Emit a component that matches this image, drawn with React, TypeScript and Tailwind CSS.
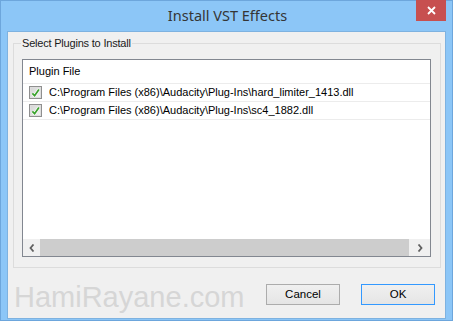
import { useState } from 'react';

const plugins = [
  'C:\\Program Files (x86)\\Audacity\\Plug-Ins\\hard_limiter_1413.dll',
  'C:\\Program Files (x86)\\Audacity\\Plug-Ins\\sc4_1882.dll',
];

function CheckBox({ checked }: { checked: boolean }) {
  return (
    <span className="flex h-[13px] w-[13px] shrink-0 items-center justify-center border border-[#8f8f8f] bg-[#f4f4f4]">
      <span className="flex h-[11px] w-[11px] items-center justify-center border border-[#dedede] bg-gradient-to-br from-[#d6d6d6] to-[#f2f2f2]">
        {checked && (
          <svg width="10" height="10" viewBox="0 0 10 10">
            <path d="M1.5 5.5 L4 8 L8.8 1.2" fill="none" stroke="#ffffff" strokeWidth="3.2" strokeLinejoin="round" />
            <path d="M1.5 5.5 L4 8 L8.8 1.2" fill="none" stroke="#3aa22c" strokeWidth="1.9" />
          </svg>
        )}
      </span>
    </span>
  );
}

function Chevron({ dir }: { dir: 'left' | 'right' }) {
  return (
    <svg width="6" height="8" viewBox="0 0 6 8">
      <path
        d={dir === 'left' ? 'M4.5 0.5 L1.5 4 L4.5 7.5' : 'M1.5 0.5 L4.5 4 L1.5 7.5'}
        fill="none"
        stroke="#606060"
        strokeWidth="1.8"
      />
    </svg>
  );
}

export default function App() {
  const [checked] = useState([true, true]);

  return (
    <div
      className="relative h-[323px] w-[453px] overflow-hidden bg-white"
      style={{ fontFamily: '"Liberation Sans", Arial, sans-serif' }}
    >
      <div className="flex h-[321px] w-full flex-col border border-[#6da6dc] bg-[#8cc6f7]">
        {/* title bar */}
        <div className="relative flex h-[30px] shrink-0 items-center justify-center">
          <span className="pl-[2px] text-[14.5px] text-[#353535]" style={{ fontFamily: '"Noto Sans", "Liberation Sans", sans-serif' }}>
            Install VST Effects
          </span>
          <div className="absolute right-[6px] top-[-1px] flex h-[21px] w-[30px] items-center justify-center bg-[#c75050]">
            <svg width="9" height="9" viewBox="0 0 9 9">
              <path d="M1 1 L8 8 M8 1 L1 8" stroke="#ffffff" strokeWidth="1.8" />
            </svg>
          </div>
        </div>

        {/* client area */}
        <div className="mb-[1px] ml-[6px] mr-[6px] flex flex-1 flex-col border border-[#7eb2e0] bg-[#f0f0f0] text-[11px] text-black">
          <div className="relative ml-[5px] mr-[4px] mt-[11px] h-[225px] border border-[#dcdcdc] pl-[8px] pr-[9px] pt-[15px]">
            <span className="absolute left-[7px] top-[-8px] bg-[#f0f0f0] px-[1px] text-[11px] leading-[14px] tracking-[-0.2px] text-[#1a1a1a]">
              Select Plugins to Install
            </span>

            {/* list view */}
            <div className="flex h-[198px] flex-col border border-[#828790] bg-white">
              <div className="flex h-[23px] shrink-0 items-center pl-[6px] text-[11px]">Plugin File</div>
              <div className="flex flex-1 flex-col border-t border-[#ececec]">
                {plugins.map((p, i) => (
                  <div key={p} className="flex h-[18px] items-center gap-[7px] border-b border-[#ececec] pl-[6px] text-[11px]">
                    <CheckBox checked={checked[i]} />
                    <span className="whitespace-nowrap">{p}</span>
                  </div>
                ))}
              </div>
              {/* horizontal scrollbar */}
              <div className="flex h-[17px] shrink-0 bg-[#f0f0f0]">
                <div className="flex w-[17px] items-center justify-center">
                  <Chevron dir="left" />
                </div>
                <div className="flex-1 bg-[#cdcdcd]" />
                <div className="flex w-[21px] items-center justify-center">
                  <Chevron dir="right" />
                </div>
              </div>
            </div>
          </div>

          {/* buttons */}
          <div className="mr-[10px] mt-[16px] flex justify-end gap-[21px]">
            <button className="h-[21px] w-[74px] border border-[#acacac] bg-gradient-to-b from-[#f0f0f0] to-[#e5e5e5] text-[11.5px] text-black">
              Cancel
            </button>
            <button className="h-[21px] w-[74px] border border-[#3399ff] bg-gradient-to-b from-[#f0f0f0] to-[#e5e5e5] text-[11.5px] text-black">
              OK
            </button>
          </div>
        </div>
      </div>

      {/* watermark */}
      <span className="pointer-events-none absolute left-[14px] top-[280px] text-[29px] leading-[34px] text-[#d6d6d6]">
        HamiRayane.com
      </span>
    </div>
  );
}
